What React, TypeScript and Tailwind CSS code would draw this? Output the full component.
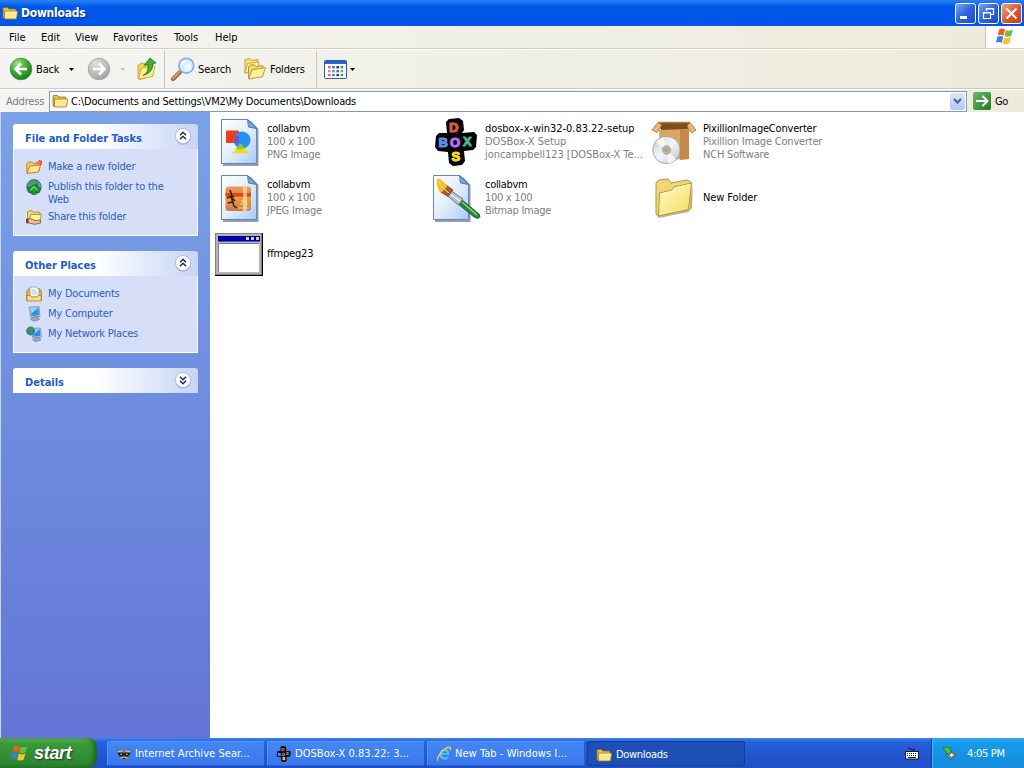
import type { ReactNode } from 'react'

type IconProps = { size?: number }

type TaskType = { icon: ReactNode; label: string; active?: boolean }

type FileType = { icon: ReactNode; name: string; lines?: string[]; tracking?: string }

/* ---------- small icons ---------- */

const FolderIcon = ({ size = 16 }: IconProps) => (
  <svg width={size} height={size} viewBox="0 0 16 16" className="shrink-0">
    <path d="M1 13V3.5Q1 2.5 2 2.5H5.5L7 4H13Q14 4 14 5V13Z" fill="#e9bf45" stroke="#8d6a16" strokeWidth=".8" />
    <path d="M2.5 6.2H15.2Q15.8 6.2 15.6 7L14.6 13Q14.5 14 13.5 14H2.5Z" fill="#fbe98f" stroke="#a07a1c" strokeWidth=".8" />
    <path d="M3.5 7.2H14.6" stroke="#fffbd8" strokeWidth=".8" />
  </svg>
)

const WindowsFlag = ({ size = 20 }: IconProps) => (
  <svg width={size} height={size} viewBox="0 0 20 20" className="shrink-0">
    <path d="M4.3 2.3Q7 .8 10 2.6L8.6 8.6Q5.7 7 2.7 8.4Z" fill="#ee5a2a" />
    <path d="M10.9 3Q14 4.6 18 2.5L16.4 8.8Q12.8 10.6 9.5 9Z" fill="#72bb38" />
    <path d="M2.4 9.6Q5.5 8.2 8.3 9.8L6.8 15.8Q4 14.2 1 15.7Z" fill="#3d7fdc" />
    <path d="M9.2 10.2Q12.5 11.8 16.1 10L14.5 16.3Q11 18.3 7.7 16.4Z" fill="#fcc332" />
  </svg>
)

const BackIcon = () => (
  <svg width="24" height="24" viewBox="0 0 24 24" className="shrink-0">
    <defs>
      <radialGradient id="back" cx=".35" cy=".25" r=".85">
        <stop offset="0" stopColor="#a5df8d" />
        <stop offset=".45" stopColor="#43ad38" />
        <stop offset="1" stopColor="#127a14" />
      </radialGradient>
    </defs>
    <circle cx="12" cy="12" r="10.8" fill="url(#back)" stroke="#3b8a35" strokeWidth=".8" />
    <path d="M18 12H7M12 6.5L6.5 12L12 17.5" fill="none" stroke="#fff" strokeWidth="2.6" />
  </svg>
)

const ForwardIcon = () => (
  <svg width="24" height="24" viewBox="0 0 24 24" className="shrink-0">
    <defs>
      <radialGradient id="fwd" cx=".35" cy=".25" r=".85">
        <stop offset="0" stopColor="#e0e0de" />
        <stop offset=".6" stopColor="#b9b9b7" />
        <stop offset="1" stopColor="#9a9a98" />
      </radialGradient>
    </defs>
    <circle cx="12" cy="12" r="10.8" fill="url(#fwd)" stroke="#a5a5a3" strokeWidth=".8" />
    <path d="M6 12H17M12 6.5L17.5 12L12 17.5" fill="none" stroke="#fff" strokeWidth="2.6" />
  </svg>
)

const UpFolderIcon = () => (
  <svg width="24" height="24" viewBox="0 0 24 24" className="shrink-0">
    <path d="M3 21L3 8.5L5 6.5L9 6L10.5 8L18 6.5V19L5 22.5Z" fill="#efd05f" stroke="#c49b2c" strokeWidth=".8" />
    <path d="M3.5 22L6.5 11.5L20 9L17.5 19.5Z" fill="#fdf096" stroke="#cda83a" strokeWidth=".8" />
    <path d="M8 18.5Q14 15.5 13 7.5L9 8.5L15 1L21 6L17.5 6.8Q18.5 15.5 8 18.5Z" fill="#3fb02f" stroke="#1c7516" strokeWidth=".8" />
  </svg>
)

const SearchIcon = () => (
  <svg width="24" height="24" viewBox="0 0 24 24" className="shrink-0">
    <path d="M2 22L9 15" stroke="#8b5a3c" strokeWidth="4" strokeLinecap="round" />
    <path d="M2 21.5L8.5 15" stroke="#dc9c72" strokeWidth="2.2" strokeLinecap="round" />
    <circle cx="15.3" cy="8.7" r="7.4" fill="#d5edfc" stroke="#8bb0dc" strokeWidth="1.7" />
    <path d="M10.5 8Q11 4.5 15.5 3.8" fill="none" stroke="#fff" strokeWidth="1.8" />
    <circle cx="17" cy="10.5" r="3.6" fill="#ebf8ff" />
  </svg>
)

const FoldersIcon = () => (
  <svg width="24" height="24" viewBox="0 0 24 24" className="shrink-0">
    <path d="M1 16V3L3 1.8H6.5L8 3.5L14 2.5V14Z" fill="#f6df78" stroke="#c39c35" strokeWidth=".9" />
    <path d="M1 16L3.5 6.5L15 5L14 14Z" fill="#fff3a5" stroke="#c39c35" strokeWidth=".8" />
    <path d="M4.5 21.5V9.5L6.5 7.8H10.5L12 9.5L19 8.5V18Z" fill="#f2d566" stroke="#b8902c" strokeWidth=".9" />
    <path d="M4.7 22L8 12.8L21.5 10.5L18.5 19.8Z" fill="#fff09a" stroke="#b8902c" strokeWidth=".9" />
  </svg>
)

const ViewsIcon = () => (
  <svg width="23" height="19" viewBox="0 0 23 19" className="shrink-0">
    <rect x=".5" y=".5" width="22" height="18" rx="1" fill="#fff" stroke="#2a5bb0" />
    <rect x="1" y="1" width="21" height="3" fill="#2863cf" />
    {['#d2714c', '#4a6fae', '#26377a', '#3a9a4a'].map((c, i) => (
      <g key={c} fill={c}>
        <rect x={4 + i * 4.2} y="6" width="2.6" height="2.4" />
        <rect x={4 + i * 4.2} y="10" width="2.6" height="2.4" opacity=".8" />
        <rect x={4 + i * 4.2} y="14" width="2.6" height="2.2" />
      </g>
    ))}
  </svg>
)

const Caret = ({ faded }: { faded?: boolean }) => (
  <svg width="5" height="3" viewBox="0 0 5 3" className="shrink-0">
    <path d="M0 0H5L2.5 3Z" fill={faded ? '#c5c3b6' : '#000'} />
  </svg>
)

const NewFolderTask = () => (
  <svg width="16" height="16" viewBox="0 0 16 16">
    <path d="M.8 14V4.5L2.5 3H6L7.5 4.5L13 4V12Z" fill="#f0c95b" stroke="#b07a20" strokeWidth=".8" />
    <path d="M1 14.5L4 7L12 6.2L15 4.5L12.5 13Z" fill="#ffe78c" stroke="#a86c1c" strokeWidth=".8" />
    <path d="M9.5 3.5L13 1.5L15.5 3L14 7L11.5 6Z" fill="#ee8437" />
    <path d="M13 1.5L15.5 2.5L15 6" fill="none" stroke="#c94525" strokeWidth="1.2" />
  </svg>
)

const PublishTask = () => (
  <svg width="16" height="16" viewBox="0 0 16 16">
    <circle cx="8" cy="7.8" r="7.3" fill="#2b62a4" stroke="#24538e" strokeWidth=".6" />
    <path d="M1.5 5Q4 .5 9 1L12 3.5L8 6L4 8L1.5 8Z" fill="#4c9f64" />
    <path d="M11 2Q15 4 15 8L12.5 8Z" fill="#57ac60" />
    <path d="M2.5 13.5L1.8 11.5L8 5.5L14.2 11.5L13 14L10 12.5V15.5H6V12.5Z" fill="#1aa02a" stroke="#0c6d18" strokeWidth=".6" />
    <path d="M4.5 11L8 7.8L11.5 11" fill="none" stroke="#6ee262" strokeWidth="1.3" />
  </svg>
)

const ShareTask = () => (
  <svg width="16" height="16" viewBox="0 0 16 16">
    <path d="M1.5 11V3L3 1.8H6L7.5 3.2H14V10Z" fill="#f4d368" stroke="#aa7f25" strokeWidth=".8" />
    <path d="M2.5 12L5 5.5H15.5L13.8 12Z" fill="#fff0a2" stroke="#aa7f25" strokeWidth=".8" />
    <path d="M.8 10L4 9.5L9 11.5L14.5 11V14L9 15.3L.8 13.5Z" fill="#f1bd8b" stroke="#7c5333" strokeWidth=".8" />
    <rect x="0" y="9.8" width="2.6" height="4.4" fill="#6b4c35" />
  </svg>
)

const DocumentsPlace = () => (
  <svg width="16" height="16" viewBox="0 0 16 16">
    <path d="M.7 14.5V5L3 2.5H13.5L15.3 5V14.5Z" fill="#e8b43c" stroke="#a8761a" strokeWidth=".8" />
    <path d="M4 11V1H10.5L13 3.5V11Z" fill="#fff" stroke="#7e94c1" strokeWidth=".8" />
    <path d="M5.5 4H10M5.5 6H11.5M5.5 8H11.5" stroke="#98aed8" strokeWidth=".8" />
    <path d="M1 9.5H4.5L5.5 11H11L12 9.5H15.2V15H1Z" fill="#fbdc7a" stroke="#a8761a" strokeWidth=".7" />
  </svg>
)

const Monitor = () => (
  <g>
    <path d="M3.5 1L13 .7L14 10.5L4.5 11.5Z" fill="#c3cde0" stroke="#6a7ba3" strokeWidth=".7" />
    <path d="M4.5 2L12.3 1.8L13 9.2L5.5 10Z" fill="#2f8fe6" />
    <path d="M4.5 2L12.3 1.8L5.5 7.5Z" fill="#8fd6ff" />
    <path d="M8 11L11.5 10.5L13.5 13.5L8 15.3L4.5 13.5Z" fill="#9aa7c2" stroke="#68779a" strokeWidth=".6" />
  </g>
)

const ComputerPlace = () => (
  <svg width="16" height="16" viewBox="0 0 16 16"><Monitor /></svg>
)

const NetworkPlace = () => (
  <svg width="16" height="16" viewBox="0 0 16 16">
    <g transform="translate(2.4 1.4) scale(.93)"><Monitor /></g>
    <circle cx="4.6" cy="5" r="4.4" fill="#2c76c1" />
    <path d="M.6 4Q3.5 -.4 7.6 2L6 5L8 7L4.5 9L3.6 6Z" fill="#35a03a" />
  </svg>
)

const RaccoonIcon = () => (
  <svg width="16" height="16" viewBox="0 0 16 16" className="shrink-0">
    <path d="M1 2L5 4H11L15 2L14.5 8L12 13L8 14.5L4 13L1.5 8Z" fill="#6e757c" />
    <path d="M1.5 7L7 6.5L8 8L9 6.5L14.5 7L12 10.5H9L8 9L7 10.5H4Z" fill="#14181f" />
    <path d="M2 5.5L7 5M14 5.5L9 5M4.5 12L8 11L11.5 12" stroke="#cdd6d4" />
    <circle cx="5.2" cy="8.2" r=".8" fill="#fff" /><circle cx="10.8" cy="8.2" r=".8" fill="#fff" />
    <path d="M7 12H9L8 13.4Z" fill="#000" />
  </svg>
)

const IEIcon = () => (
  <svg width="16" height="18" viewBox="0 0 17 18" className="shrink-0">
    <path d="M14.6 10H6.4Q6.8 12.6 9.5 12.6Q11.3 12.6 12 11.5H14.4Q13 15.4 9.4 15.4Q3.4 15 3.4 9.3Q3.8 3.4 9.3 3.3Q14.9 3.5 14.6 10ZM11.6 7.6Q11.2 6 9.2 6Q7.2 6 6.6 7.6Z" fillRule="evenodd" fill="#55c4fa" stroke="#1c7cc8" strokeWidth=".5" />
    <path d="M2.4 17Q-1 15 4.4 7.6Q10.4 .5 15 1.2Q17.4 2.2 15.2 6Q15.6 3.2 13.4 3Q9.6 3.4 5.4 8.7Q1.4 14.2 2.4 17Z" fill="#f6cf43" />
  </svg>
)

/* ---------- 48px file icons ---------- */

const Page = () => (
  <g>
    <path d="M8 3H36L43.5 11V48H8Z" fill="#3f4d6c" opacity=".55" />
    <path d="M6.5 1.5H33L41.5 10V45.5H6.5Z" fill="url(#page)" stroke="#6484bd" />
    <path d="M32.5 1.5L41.5 10.5L33.5 9Z" fill="#6ea7ea" stroke="#41669f" strokeWidth=".8" />
  </g>
)

const PngIcon = () => (
  <svg width="48" height="48" viewBox="0 0 48 48">
    <Page />
    <rect x="11" y="12.5" width="13" height="12.5" rx="1" fill="#f03a1b" />
    <circle cx="27" cy="22" r="8.6" fill="#2390f4" />
    <path d="M19.5 18H24V25H18.7Q17.5 21 19.5 18Z" fill="#8550a5" />
    <path d="M25.5 25.5L34 35.5H17Z" fill="#ead923" />
    <path d="M25.5 25.5L29.5 30.2Q24 31.5 20.8 31Z" fill="#83c73d" />
  </svg>
)

const JpegIcon = () => (
  <svg width="48" height="48" viewBox="0 0 48 48">
    <Page />
    <rect x="10.5" y="12.5" width="25.5" height="24.5" rx="3" fill="url(#sunset)" />
    <path d="M10.5 19H36V22.5H10.5Z" fill="#c9401a" opacity=".85" />
    <path d="M30 13V37" stroke="#fff1b0" strokeWidth="4" opacity=".6" />
    <path d="M15 16L17 22L19 23M12 24L16 22.5L19 32M16 23L20 27M13 29L17 28M19 32L22 34" fill="none" stroke="#3a1c13" strokeWidth="1.5" />
    <path d="M23 34H34M25 30H33M26 27H32" stroke="#ffe388" opacity=".8" />
  </svg>
)

const BmpIcon = () => (
  <svg width="48" height="48" viewBox="0 0 48 48">
    <g transform="translate(-6)"><Page /></g>
    <path d="M28 25L46 40Q48.5 43 45 44.5L41 43L24.5 29.5Z" fill="#238a35" stroke="#114c1c" strokeWidth=".8" />
    <path d="M29 28L44 41" stroke="#80d77f" strokeWidth="1.6" />
    <path d="M17 16L30 25L25.5 31L14 21.5Z" fill="#b9c1cf" stroke="#5d6676" strokeWidth=".8" />
    <path d="M17 20L27 27" stroke="#f4f6fa" strokeWidth="1.5" />
    <path d="M13 11L20 16L15 22.5L7.5 18Z" fill="#b4562a" stroke="#6f2e14" strokeWidth=".7" />
    <path d="M4 4Q10 6 14.5 12L8 19Q2.5 14 4 4Z" fill="#f9bd30" />
    <path d="M6 8L10 14M11 15L16 19" stroke="#ffe58c" />
  </svg>
)

const DosBoxIcon = ({ size = 48 }: IconProps) => {
  const letters = [
    { c: 'D', x: 16, y: 14, fill: '#dc5a48' },
    { c: 'B', x: 5.5, y: 29, fill: '#5d8bee' },
    { c: 'O', x: 17, y: 29, fill: '#b56cf0' },
    { c: 'X', x: 30, y: 28, fill: '#45b583' },
    { c: 'S', x: 18.5, y: 43, fill: '#f7d62e' },
  ]
  return (
    <svg width={size} height={size} viewBox="0 0 48 48" className="shrink-0">
      <path d="M16 1L26 0L30 3L31 12L29 15L41 14L44 17L43 29L40 32L31 33L32 43L29 47L20 48L16 45L15 34L5 33L2 29L3 18L6 15L14 15L13 4Z" fill="#000" />
      <g fontFamily="Liberation Sans, sans-serif" fontWeight="700" fontSize="13" strokeLinejoin="round" strokeWidth="1.2">
        {letters.map((l) => <text key={l.c} x={l.x} y={l.y} fill={l.fill} stroke={l.fill}>{l.c}</text>)}
      </g>
    </svg>
  )
}

const InstallerIcon = () => (
  <svg width="48" height="48" viewBox="0 0 48 48">
    <path d="M7 5H39L36 14H11Z" fill="#7d4c21" />
    <path d="M8 12L38 11V41L9 42Z" fill="#dba663" />
    <path d="M29 12H38V41L29 42Z" fill="#c38a48" />
    <path d="M7 4.5L1 12L6 14.5L11 7ZM39 4.5L45 12L40.5 15L36 8Z" fill="#e9b778" stroke="#a36a30" strokeWidth=".8" />
    <path d="M7 4.5H39" stroke="#b57a3d" strokeWidth="1.5" />
    <circle cx="15.5" cy="32" r="13.7" fill="url(#disc)" stroke="#92969c" strokeWidth=".8" />
    <path d="M15.5 32L5 24Q8 20 13 19Z M15.5 32L25 41Q22 45 17 45.5Z" fill="#fff" opacity=".7" />
    <circle cx="15.5" cy="32" r="4.2" fill="#b6b8ba" stroke="#8c8f94" strokeWidth=".7" />
    <circle cx="15.5" cy="32" r="2.4" fill="#c5a36b" />
  </svg>
)

const BigFolderIcon = () => (
  <svg width="48" height="48" viewBox="0 0 48 48">
    <path d="M6 42L41 33L42 9L38 38L8 44Z" fill="#77705a" opacity=".5" />
    <path d="M5 40V9L8 6L17 5L20 9L36 6L40 8V35L7 42Z" fill="#f2d673" stroke="#b8953d" />
    <path d="M7.5 42L8.5 19L21 16L23 13L40.5 9L37.5 35.5Z" fill="url(#folder)" stroke="#ba983f" />
    <path d="M9.5 20L22 17L24 14L39 10.5" fill="none" stroke="#fffde2" />
  </svg>
)

const AppWindowIcon = () => (
  <svg width="48" height="48" viewBox="0 0 48 48">
    <rect x="0" y="3" width="48" height="43" fill="#000" />
    <rect x="0" y="3" width="47" height="42" fill="#808080" />
    <rect x="1" y="4" width="45" height="40" fill="#b4b4b4" />
    <rect x="3" y="6" width="42" height="5.5" fill="#0000a8" />
    <path d="M31 7H34V10H31ZM36 7H39V10H36ZM41 7H44V10H41Z" fill="#d0d0d0" />
    <rect x="3" y="13" width="41" height="29" fill="#808080" />
    <rect x="4" y="14" width="40" height="28" fill="#fff" />
  </svg>
)

const SharedGradients = () => (
  <svg width="0" height="0" className="absolute">
    <defs>
      <linearGradient id="page" x1="0" y1="0" x2="1" y2="1">
        <stop offset="0" stopColor="#ffffff" /><stop offset=".5" stopColor="#e3eefe" /><stop offset="1" stopColor="#a9c9f8" />
      </linearGradient>
      <linearGradient id="sunset" x1="0" y1="0" x2="0" y2="1">
        <stop offset="0" stopColor="#e5a06a" /><stop offset=".3" stopColor="#f0892b" /><stop offset=".5" stopColor="#f09a45" /><stop offset="1" stopColor="#c47c4a" />
      </linearGradient>
      <linearGradient id="folder" x1="0" y1="0" x2="1" y2="1">
        <stop offset="0" stopColor="#fffac5" /><stop offset="1" stopColor="#f6dc62" />
      </linearGradient>
      <linearGradient id="disc" x1="0" y1="0" x2="1" y2="1">
        <stop offset="0" stopColor="#c9ccd2" /><stop offset=".5" stopColor="#f5f6f8" /><stop offset="1" stopColor="#b9bcc4" />
      </linearGradient>
    </defs>
  </svg>
)

/* ---------- window chrome ---------- */

const TitleBar = () => (
  <div className="flex h-[26px] shrink-0 items-center bg-linear-to-b from-[#2b80f5] via-[#0157ea] via-25% to-[#0254e8] pr-[2px] pl-[2px]">
    <FolderIcon />
    <span className="ml-[3px] flex-1 pt-px text-[12px] font-bold tracking-[-0.25px] text-white [text-shadow:1px_1px_1px_#0a2f8c]">Downloads</span>
    <div className="flex gap-[2px]">
      <div className="h-[21px] w-[21px] rounded-[3px] border border-white bg-linear-to-br from-[#7ba2f2] via-[#2f63dc] to-[#1c4bd0]">
        <svg width="19" height="19"><path d="M4 12H11V15H4Z" fill="#fff" /></svg>
      </div>
      <div className="h-[21px] w-[21px] rounded-[3px] border border-white bg-linear-to-br from-[#7ba2f2] via-[#2f63dc] to-[#1c4bd0]">
        <svg width="19" height="19"><path d="M7.5 7V4.5H14.5V10.5H12M7 5H15M4.5 8.5H11.5V14.5H4.5ZM4 9H12" fill="none" stroke="#fff" strokeWidth="1.2" /></svg>
      </div>
      <div className="h-[21px] w-[21px] rounded-[3px] border border-white bg-linear-to-br from-[#f0a186] via-[#e05a35] to-[#c53a15]">
        <svg width="19" height="19"><path d="M4.5 4.5L14.5 14.5M14.5 4.5L4.5 14.5" stroke="#fff" strokeWidth="2.1" /></svg>
      </div>
    </div>
  </div>
)

const MenuBar = () => (
  <div className="flex h-[23px] shrink-0 items-stretch border-b border-[#d2cfbf] bg-linear-to-r from-[#f4f4f2] to-[#edebdb] tracking-[0px]">
    <div className="flex flex-1 items-center">
      <span className="ml-[9px] w-8">File</span>
      <span className="w-[34px]">Edit</span>
      <span className="w-[38px]">View</span>
      <span className="w-[61px]">Favorites</span>
      <span className="w-[41px]">Tools</span>
      <span>Help</span>
    </div>
    <div className="flex w-[39px] items-center justify-center border-l border-[#c9c6b5] bg-white">
      <WindowsFlag />
    </div>
  </div>
)

const Toolbar = () => (
  <div className="flex h-[40px] shrink-0 items-center border-t border-b border-t-white border-b-[#cdcab9] bg-linear-to-r from-[#f4f4f2] to-[#edebdb] pl-[9px] tracking-[-0.15px]">
    <BackIcon />
    <span className="ml-[3px] w-[33px]">Back</span>
    <Caret />
    <div className="ml-[13px] flex"><ForwardIcon /></div>
    <div className="ml-[9px] flex"><Caret faded /></div>
    <div className="ml-[10px] flex"><UpFolderIcon /></div>
    <div className="ml-[5px] h-[37px] w-px bg-[#c9c6b8]" />
    <div className="ml-[6px] flex"><SearchIcon /></div>
    <span className="ml-[3px] w-[46px]">Search</span>
    <FoldersIcon />
    <span className="ml-[2px] w-[46px]">Folders</span>
    <div className="h-[37px] w-px bg-[#c9c6b8]" />
    <div className="ml-[7px] flex"><ViewsIcon /></div>
    <div className="ml-[3px] flex"><Caret /></div>
  </div>
)

const AddressBar = () => (
  <div className="flex h-[23px] shrink-0 items-center border-t border-t-white bg-linear-to-r from-[#f4f4f2] to-[#edebdb] pl-[6px]">
    <span className="w-[43px] tracking-[-0.15px] text-[#7f7d75]">Address</span>
    <div className="flex h-[21px] w-[918px] items-center border border-[#7f9db9] bg-white pl-[2px]">
      <FolderIcon />
      <span className="ml-[3px] flex-1 tracking-[-0.2px]">C:\Documents and Settings\VM2\My Documents\Downloads</span>
      <div className="mr-px flex h-[17px] w-[15px] items-center justify-center rounded-[2px] bg-linear-to-b from-[#dbe5fd] to-[#b4c8f6]">
        <svg width="9" height="6"><path d="M1 1L4.5 4.5L8 1" fill="none" stroke="#4d6185" strokeWidth="2" /></svg>
      </div>
    </div>
    <div className="ml-[6px] flex h-[18px] w-[18px] items-center justify-center rounded-[2px] bg-linear-to-br from-[#6cbb66] to-[#187a1e]">
      <svg width="14" height="14"><path d="M1 7H12M7.5 2L12.5 7L7.5 12" fill="none" stroke="#fff" strokeWidth="2" /></svg>
    </div>
    <span className="ml-[4px]">Go</span>
  </div>
)

/* ---------- task pane ---------- */

const Panel = ({ title, collapsed, children }: { title: string; collapsed?: boolean; children?: ReactNode }) => (
  <section className="mb-[15px]">
    <div className="flex h-[25px] items-center justify-between rounded-t-[3px] bg-linear-to-r from-white from-45% to-[#c8d4f7] pr-[6px] pl-[12px]">
      <span className="pt-[3px] font-bold tracking-[0px] text-[#215dc6]">{title}</span>
      <svg width="18" height="18" viewBox="0 0 18 18" className="-mt-px">
        <path d="M9 1.5A8 8 0 0 1 9 17.6A8 8 0 0 1 2 13" fill="#8b9cc9" />
        <circle cx="9" cy="9" r="7.6" fill="#fff" stroke="#b4c0e2" />
        <g transform={collapsed ? 'rotate(180 9 9)' : undefined}>
          <path d="M6 8.3L9 5.3L12 8.3M6 12.3L9 9.3L12 12.3" fill="none" stroke="#1b2f66" strokeWidth="1.5" />
        </g>
      </svg>
    </div>
    {children && <div className="border border-t-0 border-white bg-[#d6dff7] pt-[11px] pb-[11px] pl-[12px] tracking-[-0.2px] text-[#2a60bf]">{children}</div>}
  </section>
)

const Link = ({ icon, children }: { icon: ReactNode; children: ReactNode }) => (
  <div className="mb-[7px] flex">
    <div className="-mt-px mr-[6px] -mb-[3px] h-4 w-4 shrink-0">{icon}</div>
    <span className="leading-[13px]">{children}</span>
  </div>
)

const Sidebar = () => (
  <aside className="w-[210px] shrink-0 border-l border-[#c3d8f4] bg-linear-to-b from-[#7ba2e7] to-[#6375d6] pt-[12px] pr-[12px] pl-[12px]">
    <Panel title="File and Folder Tasks">
      <div className="h-[64px]">
        <Link icon={<NewFolderTask />}>Make a new folder</Link>
        <Link icon={<PublishTask />}>Publish this folder to the<br />Web</Link>
        <div className="-mt-[3px]"><Link icon={<ShareTask />}>Share this folder</Link></div>
      </div>
    </Panel>
    <Panel title="Other Places">
      <div className="h-[54px]">
        <Link icon={<DocumentsPlace />}>My Documents</Link>
        <Link icon={<ComputerPlace />}>My Computer</Link>
        <Link icon={<NetworkPlace />}>My Network Places</Link>
      </div>
    </Panel>
    <Panel title="Details" collapsed />
  </aside>
)

/* ---------- files ---------- */

const files: FileType[] = [
  { icon: <PngIcon />, name: 'collabvm', lines: ['100 x 100', 'PNG Image'] },
  { icon: <DosBoxIcon />, name: 'dosbox-x-win32-0.83.22-setup', lines: ['DOSBox-X Setup', 'joncampbell123 [DOSBox-X Te...'], tracking: 'tracking-[-0.04px]' },
  { icon: <InstallerIcon />, name: 'PixillionImageConverter', lines: ['Pixillion Image Converter', 'NCH Software'] },
  { icon: <JpegIcon />, name: 'collabvm', lines: ['100 x 100', 'JPEG Image'] },
  { icon: <BmpIcon />, name: 'collabvm', lines: ['100 x 100', 'Bitmap Image'], tracking: 'tracking-[-0.3px]' },
  { icon: <BigFolderIcon />, name: 'New Folder', tracking: 'tracking-[-0.1px]' },
  { icon: <AppWindowIcon />, name: 'ffmpeg23' },
]

const FileGrid = () => (
  <main className="flex-1 bg-white pt-[6px] pl-[5px]">
    <div className="grid grid-cols-[218px_218px_218px] auto-rows-[56px]">
      {files.map((file, i) => (
        <div key={i} className="flex h-[48px] items-center">
          <div className="h-12 w-12 shrink-0">{file.icon}</div>
          <div className={`ml-[4px] pb-[2px] leading-[13px] whitespace-nowrap ${file.tracking ?? 'tracking-[-0.2px]'}`}>
            <p>{file.name}</p>
            {file.lines?.map((line) => <p key={line} className="text-[#808080]">{line}</p>)}
          </div>
        </div>
      ))}
    </div>
  </main>
)

/* ---------- taskbar ---------- */

const tasks: TaskType[] = [
  { icon: <RaccoonIcon />, label: 'Internet Archive Sear...' },
  { icon: <DosBoxIcon size={16} />, label: 'DOSBox-X 0.83.22: 3...' },
  { icon: <IEIcon />, label: 'New Tab - Windows I...' },
  { icon: <FolderIcon />, label: 'Downloads', active: true },
]

const Taskbar = () => (
  <footer className="flex h-[30px] shrink-0 bg-linear-to-b from-[#3b82ef] via-[#255ddb] via-15% to-[#1e4fc6]">
    <div className="flex w-[97px] items-center rounded-r-[9px] bg-linear-to-b from-[#5cab59] via-[#379a37] via-20% to-[#2d8430] pl-[10px] shadow-[inset_-3px_-1px_4px_#1e6423]">
      <WindowsFlag size={19} />
      <span className="ml-[5px] font-['Liberation_Sans',sans-serif] text-[18px] font-bold tracking-[-0.3px] text-white italic [text-shadow:1px_1px_2px_#143f16]">start</span>
    </div>
    <div className="ml-[10px] flex flex-1 items-center gap-[2px] pt-px">
      {tasks.map((task) => (
        <div
          key={task.label}
          className={`flex h-[25px] w-[158px] items-center rounded-[2px] border pl-[8px] whitespace-nowrap text-white ${task.active
            ? 'gap-[4px] border-[#143f97] bg-[#1e4fb4] pt-[2px]'
            : 'gap-[3px] border-[#5592f8] border-r-[#255cc9] border-b-[#2a62d2] bg-linear-to-b from-[#4487f5] to-[#3878ec] tracking-[0.05px]'}`}
        >
          {task.icon}
          <span>{task.label}</span>
        </div>
      ))}
    </div>
    <div className="mr-[12px] flex items-center">
      <svg width="14" height="14" viewBox="0 0 14 14">
        <path d="M2 3Q4 1 6 3T10 3" fill="none" stroke="#0d1e4a" />
        <rect x=".5" y="5.5" width="13" height="7.5" fill="#fff" stroke="#101a33" />
        <path d="M2 7.5H12M2 9.5H12" stroke="#101a33" strokeDasharray="1 1" />
        <path d="M3 11.5H11" stroke="#101a33" />
      </svg>
    </div>
    <div className="flex w-[93px] items-center border-l border-[#1243a0] bg-linear-to-b from-[#2ea5f0] via-[#159aec] via-20% to-[#148adc] pl-[10px] text-white shadow-[inset_1px_0_1px_#45bbf5]">
      <svg width="16" height="16" viewBox="0 0 16 16">
        <path d="M4 10L10 6.5L14.5 10L8.5 14.5Z" fill="#8b9096" stroke="#41484d" strokeWidth=".8" />
        <circle cx="9.5" cy="10" r="2" fill="#e9edf0" stroke="#666" strokeWidth=".6" />
        <path d="M1.5 2L9.5 3L8 5L9.5 7.5L6 10L4.5 6.5L2.5 6Z" fill="#46c34a" stroke="#1b7424" strokeWidth=".7" />
      </svg>
      <span className="ml-[9px]">4:05 PM</span>
    </div>
  </footer>
)

export default function App() {
  return (
    <div className="flex h-[768px] w-[1024px] flex-col overflow-hidden bg-white font-['DejaVu_Sans_Condensed','DejaVu_Sans',sans-serif] text-[11px] leading-[13px] tracking-[-0.3px] text-black">
      <SharedGradients />
      <TitleBar />
      <MenuBar />
      <Toolbar />
      <AddressBar />
      <div className="flex min-h-0 flex-1">
        <Sidebar />
        <FileGrid />
      </div>
      <Taskbar />
    </div>
  )
}
